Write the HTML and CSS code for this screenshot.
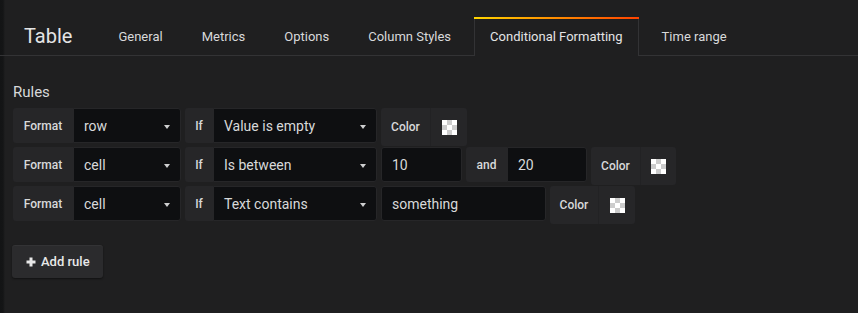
FILE: index.html
```html
<!DOCTYPE html>
<html>
<head>
<meta charset="utf-8">
<link rel="stylesheet" href="styles.css">
</head>
<body>
<div class="page">
  <div class="header">
    <div class="title">Table</div>
    <div class="tabs">
      <div class="tab">General</div>
      <div class="tab">Metrics</div>
      <div class="tab">Options</div>
      <div class="tab">Column Styles</div>
      <div class="tab active">Conditional Formatting</div>
      <div class="tab">Time range</div>
    </div>
  </div>
  <div class="content">
    <h5 class="section-title">Rules</h5>

    <div class="rule">
      <div class="group">
        <span class="label w-format">Format</span>
        <div class="select w-sel1">row<span class="caret"></span></div>
      </div>
      <div class="group">
        <span class="label w-if">If</span>
        <div class="select w-sel2">Value is empty<span class="caret"></span></div>
      </div>
      <div class="group group-color">
        <span class="label label-color">Color</span>
        <span class="label swatch-box"><span class="swatch"></span></span>
      </div>
    </div>

    <div class="rule">
      <div class="group">
        <span class="label w-format">Format</span>
        <div class="select w-sel1">cell<span class="caret"></span></div>
      </div>
      <div class="group">
        <span class="label w-if">If</span>
        <div class="select w-sel2">Is between<span class="caret"></span></div>
      </div>
      <div class="group">
        <div class="input w-num1">10</div>
      </div>
      <div class="group">
        <span class="label w-and">and</span>
        <div class="input w-num2">20</div>
      </div>
      <div class="group group-color">
        <span class="label label-color">Color</span>
        <span class="label swatch-box swatch-box-narrow"><span class="swatch"></span></span>
      </div>
    </div>

    <div class="rule">
      <div class="group">
        <span class="label w-format">Format</span>
        <div class="select w-sel1">cell<span class="caret"></span></div>
      </div>
      <div class="group">
        <span class="label w-if">If</span>
        <div class="select w-sel2">Text contains<span class="caret"></span></div>
      </div>
      <div class="group">
        <div class="input w-text">something</div>
      </div>
      <div class="group group-color">
        <span class="label label-color label-color-narrow">Color</span>
        <span class="label swatch-box"><span class="swatch"></span></span>
      </div>
    </div>

    <button class="btn">
      <svg class="plus" width="10" height="10" viewBox="0 0 10 10"><path d="M5 0.5V9.5M0.5 5H9.5" stroke="#e8e8e8" stroke-width="3"/></svg>
      <span>Add rule</span>
    </button>
  </div>
</div>
</body>
</html>
```

FILE: styles.css
```css
* {
  box-sizing: border-box;
}

html, body {
  margin: 0;
  padding: 0;
}

body {
  width: 858px;
  height: 313px;
  overflow: hidden;
  background: #1f1f20;
  font-family: Roboto, "Noto Sans", Arial, sans-serif;
  color: #d8d9da;
}

.page {
  height: 313px;
  background: linear-gradient(to right, #131415 0, #141516 3px, #1f1f20 5px);
}

.header {
  display: flex;
  align-items: flex-end;
  height: 56px;
  padding-left: 24px;
  border-bottom: 1px solid #333335;
}

.title {
  font-size: 20px;
  line-height: 38px;
  color: #e4e4e5;
  margin-right: 30px;
}

.tabs {
  display: flex;
  gap: 7px;
}

.tab {
  position: relative;
  height: 39px;
  margin-bottom: -1px;
  padding: 0 15px;
  border: 1px solid transparent;
  border-bottom: 0;
  font-size: 13px;
  line-height: 37px;
  color: #d8d9da;
  white-space: nowrap;
}

.tab.active {
  border-color: #333335;
  background: #1f1f20;
  color: #e4e4e5;
}

.tab.active::before {
  content: "";
  position: absolute;
  top: -1px;
  left: -1px;
  right: -1px;
  height: 2px;
  background: linear-gradient(to right, #ffd500 0%, #ff4400 99%, #ff4400 100%);
}

.content {
  padding: 27px 13px 0;
}

.section-title {
  margin: 0 0 7px;
  font-size: 15px;
  line-height: 18px;
  font-weight: 400;
  color: #d8d9da;
}

.rule {
  display: flex;
  align-items: flex-start;
  gap: 4px;
  height: 35px;
  margin-bottom: 4px;
}

.group {
  display: flex;
  height: 35px;
}

.group-color {
  height: 38px;
}

.label {
  display: flex;
  align-items: center;
  justify-content: center;
  height: 100%;
  background: #262628;
  font-size: 12px;
  font-weight: 500;
  color: #d8d9da;
  white-space: nowrap;
}

.group > :first-child {
  border-radius: 3px 0 0 3px;
}

.group > :last-child {
  border-radius: 0 3px 3px 0;
}

.group > :only-child {
  border-radius: 3px;
}

.w-format { width: 60px; }
.w-if { width: 28px; }
.w-and { width: 41px; }

.label-color {
  width: 50px;
  border-right: 1px solid #222224;
}

.label-color-narrow {
  width: 49px;
}

.swatch-box {
  width: 36px;
}

.swatch-box-narrow {
  width: 35px;
}

.swatch {
  display: block;
  width: 15px;
  height: 15px;
  background-color: #ffffff;
  background-image: conic-gradient(#cccccc 0 25%, #ffffff 0 50%, #cccccc 0 75%, #ffffff 0);
  background-size: 10px 10px;
  background-position: 0 0;
}

.select,
.input {
  position: relative;
  display: flex;
  align-items: center;
  height: 35px;
  padding: 1px 10px 0;
  background: #0e0f11;
  border: 1px solid #262628;
  font-size: 14px;
  color: #d8d9da;
  white-space: nowrap;
}

.w-sel1 { width: 108px; }
.w-sel2 { width: 164px; }
.w-num1 { width: 81px; }
.w-num2 { width: 80px; }
.w-text { width: 165px; }

.caret {
  position: absolute;
  right: 10px;
  top: 16px;
  width: 0;
  height: 0;
  border-top: 4px solid #cfd0d1;
  border-left: 3.5px solid transparent;
  border-right: 3.5px solid transparent;
}

.btn {
  display: inline-flex;
  align-items: center;
  gap: 5px;
  height: 33px;
  margin-top: 20px;
  margin-left: -1px;
  padding: 0 13px 0 14px;
  background: #2b2b2d;
  border: 0;
  border-radius: 3px;
  box-shadow: 0 1px 2px rgba(0, 0, 0, 0.45), inset 0 1px 0 rgba(255, 255, 255, 0.04);
  font-family: Roboto, "Noto Sans", Arial, sans-serif;
  font-size: 13px;
  font-weight: 500;
  color: #e8e8e8;
  cursor: pointer;
}

.plus {
  display: block;
}
```
